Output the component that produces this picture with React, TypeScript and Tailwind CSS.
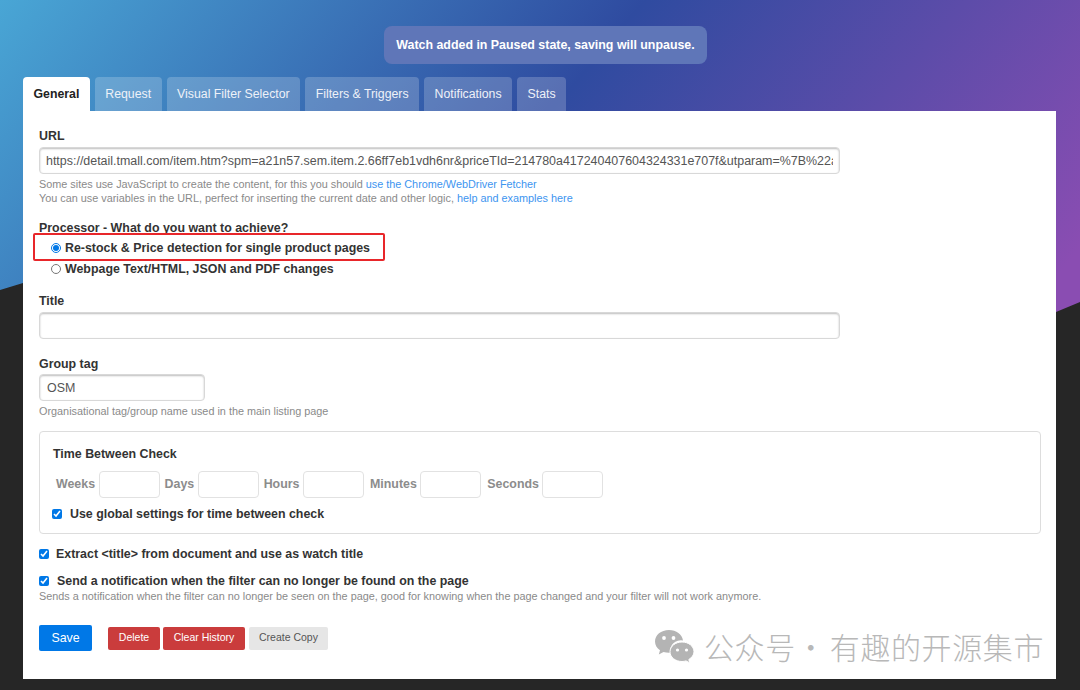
import { useState } from "react";

const tabs = ["General", "Request", "Visual Filter Selector", "Filters & Triggers", "Notifications", "Stats"];
const timeFields = [
  { name: "Weeks", cls: "ml-[3px]" },
  { name: "Days", cls: "ml-[5px]" },
  { name: "Hours", cls: "ml-[5px]" },
  { name: "Minutes", cls: "ml-[6px]" },
  { name: "Seconds", cls: "ml-[6px]" },
];
const url =
  "https://detail.tmall.com/item.htm?spm=a21n57.sem.item.2.66ff7eb1vdh6nr&priceTId=214780a417240407604324331e707f&utparam=%7B%22aplus_abtest%22%3A%22";

const inputCls = "rounded-[4px] border border-[#d8d8d8] shadow-[inset_0_1px_2px_#bdbdbd] bg-white text-[12.450px] text-[#555] outline-none";
const helpCls = "text-[10.850px] leading-[14px] text-[#8a8a8a]";

function WeChatMark() {
  return (
    <svg width="41" height="34" viewBox="0 0 41 34" className="shrink-0" fill="#b4b4b4">
      <path d="M15 1C7 1 1 6 1 12.500c0 3.600 1.900 6.600 5 8.800L4.800 25.500 9.500 23c1.700.5 3.500.8 5.500.8h1a11 11 0 0 1 13-12.300C28.200 5.500 22.300 1 15 1z" />
      <path d="M28 13c-6.600 0-12 4.300-12 9.800 0 5.400 5.400 9.700 12 9.700 1.400 0 2.700-.2 4-.6l3.800 2-1-3.400c3-1.800 5.200-4.600 5.200-7.700C40 17.300 34.600 13 28 13z" stroke="#fff" strokeWidth="1" />
      <circle cx="10" cy="9" r="1.900" fill="#fff" />
      <circle cx="19.500" cy="9" r="1.900" fill="#fff" />
      <circle cx="23.500" cy="21" r="1.600" fill="#fff" />
      <circle cx="32.500" cy="21" r="1.600" fill="#fff" />
    </svg>
  );
}

export default function App() {
  const [processor, setProcessor] = useState("restock");

  return (
    <div className="relative h-[690px] w-[1080px] overflow-hidden bg-[#262626] font-['Liberation_Sans',Arial,sans-serif] text-[#333]">
      {/* gradient header */}
      <div className="absolute inset-x-0 top-0 h-[420px] bg-[linear-gradient(130deg,#49a6d5_0%,#2f4ba0_45%,#8a4db2_90%)] [clip-path:polygon(0_0,100%_0,100%_302px,1056px_312px,23px_283px,0_290px)]" />

      <div className="relative flex flex-col">
        <div className="flex h-[77px] items-start justify-center pt-[26px]">
          <div className="ml-[11px] flex h-[38px] w-[323px] items-center justify-center whitespace-nowrap rounded-[8px] bg-[#5f76b8] text-[12.400px] font-bold text-white">
            Watch added in Paused state, saving will unpause.
          </div>
        </div>

        {/* tabs */}
        <nav className="ml-[23px] flex h-[34px] gap-[5px]">
          {tabs.map((tab, i) => (
            <div
              key={tab}
              className={
                i === 0
                  ? "flex items-center rounded-t-[4px] bg-white px-[10.500px] text-[12.300px] font-bold text-[#222]"
                  : "flex items-center rounded-t-[4px] bg-white/20 px-[10.500px] text-[12.300px] text-[#eef1f8]"
              }
            >
              {tab}
            </div>
          ))}
        </nav>

        {/* form panel */}
        <main className="ml-[23px] flex h-[568px] w-[1033px] flex-col bg-white px-[16px] pt-[17px]">
          <label className="text-[12.400px] font-bold leading-[16px]">URL</label>
          <input readOnly value={url} className={"mt-[3px] h-[27px] w-[801px] px-[6px] " + inputCls} />
          <p className={"mt-[3px] " + helpCls}>
            Some sites use JavaScript to create the content, for this you should{" "}
            <a className="text-[#3d95f0]">use the Chrome/WebDriver Fetcher</a>
          </p>
          <p className={helpCls}>
            You can use variables in the URL, perfect for inserting the current date and other logic,{" "}
            <a className="text-[#3d95f0]">help and examples here</a>
          </p>

          <div className="relative mt-[15px] text-[12.400px] font-bold">
            <div className="leading-[16px] text-[#333]">Processor - What do you want to achieve?</div>
            <label className="mt-[2px] flex h-[20px] items-center pl-[12px]">
              <input
                type="radio"
                checked={processor === "restock"}
                onChange={() => setProcessor("restock")}
                className="mr-[4px] size-[10px] accent-[#0078e7]"
              />
              Re-stock &amp; Price detection for single product pages
            </label>
            <label className="mt-[1px] flex h-[20px] items-center pl-[12px]">
              <input
                type="radio"
                checked={processor === "webpage"}
                onChange={() => setProcessor("webpage")}
                className="mr-[4px] size-[10px]"
              />
              Webpage Text/HTML, JSON and PDF changes
            </label>
            {/* red annotation box */}
            <div className="absolute left-[-6px] top-[13px] h-[28px] w-[352px] rounded-[2px] border-2 border-[#e8262a]" />
          </div>

          <label className="mt-[14px] text-[12.400px] font-bold leading-[16px]">Title</label>
          <input readOnly className={"mt-[3px] h-[27px] w-[801px] " + inputCls} />

          <label className="mt-[17px] text-[12.400px] font-bold leading-[16px]">Group tag</label>
          <input readOnly value="OSM" className={"mt-[2px] h-[27px] w-[166px] px-[7px] " + inputCls} />
          <p className={"mt-[3px] " + helpCls}>Organisational tag/group name used in the main listing page</p>

          <section className="mt-[13px] flex h-[103px] w-[1002px] flex-col rounded-[4px] border border-[#ddd] px-[13px] pt-[14px]">
            <h3 className="text-[12.400px] font-bold leading-[16px]">Time Between Check</h3>
            <div className="mt-[9px] flex items-center">
              {timeFields.map((f) => (
                <div key={f.name} className={"flex items-center " + f.cls}>
                  <span className="mr-[3.500px] text-[12.400px] font-bold text-[#8c8c8c]">{f.name}</span>
                  <input readOnly className="h-[27px] w-[61px] rounded-[4px] border border-[#e2e2e2] outline-none" />
                </div>
              ))}
            </div>
            <label className="-ml-[1px] mt-[8px] flex items-center text-[12.400px] font-bold leading-[16px]">
              <input type="checkbox" defaultChecked className="mr-[8px] size-[10px] accent-[#0078e7]" />
              Use global settings for time between check
            </label>
          </section>

          <label className="mt-[12px] flex items-center text-[12.400px] font-bold leading-[16px]">
            <input type="checkbox" defaultChecked className="mr-[7px] size-[10px] accent-[#0078e7]" />
            Extract &lt;title&gt; from document and use as watch title
          </label>
          <label className="mt-[11px] flex items-center text-[12.400px] font-bold leading-[16px]">
            <input type="checkbox" defaultChecked className="mr-[8px] size-[10px] accent-[#0078e7]" />
            Send a notification when the filter can no longer be found on the page
          </label>
          <p className={helpCls}>
            Sends a notification when the filter can no longer be seen on the page, good for knowing when the page changed and your filter will not work anymore.
          </p>

          <div className="mt-[22px] flex items-center">
            <button className="h-[26px] w-[53px] rounded-[2px] bg-[#0078e7] text-[12.400px] text-white">Save</button>
            <button className="ml-[16px] h-[23px] w-[52px] rounded-[2px] bg-[#ca3c3c] text-[10.500px] text-white">Delete</button>
            <button className="ml-[3px] h-[23px] w-[82px] rounded-[2px] bg-[#ca3c3c] text-[10.500px] text-white">Clear History</button>
            <button className="ml-[4px] h-[23px] w-[79px] rounded-[2px] bg-[#e6e6e6] text-[10.500px] text-[#555]">Create Copy</button>
          </div>
        </main>
      </div>

      {/* watermark */}
      <div className="absolute left-[654px] top-[628px] flex items-center gap-[9px] font-['Noto_Sans_CJK_SC',sans-serif] text-[30px] font-light leading-[36px] tracking-[0.6px] text-[#b8b8b8]">
        <WeChatMark />
        <span className="whitespace-nowrap">
          公众号<span className="mr-[6px] inline-block w-[28px] text-center">·</span>有趣的开源集市
        </span>
      </div>
    </div>
  );
}
